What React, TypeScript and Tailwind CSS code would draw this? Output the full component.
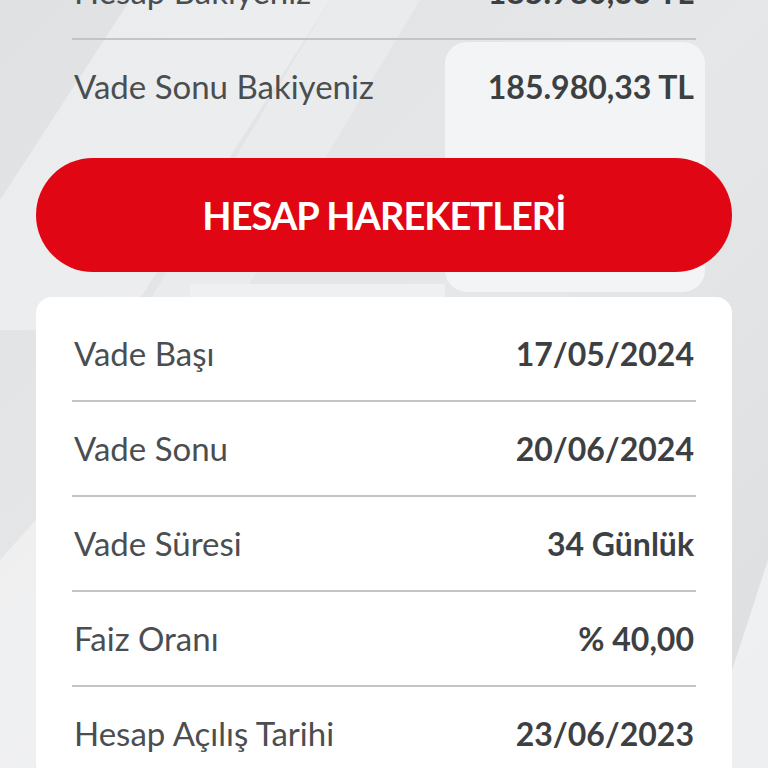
import React from "react";

const font = { fontFamily: "Lato, 'Open Sans', sans-serif" };

const summary = [
  { label: "Hesap Bakiyeniz", value: "185.980,33 TL" },
  { label: "Vade Sonu Bakiyeniz", value: "185.980,33 TL" },
];

const details = [
  { label: "Vade Başı", value: "17/05/2024" },
  { label: "Vade Sonu", value: "20/06/2024" },
  { label: "Vade Süresi", value: "34 Günlük" },
  { label: "Faiz Oranı", value: "% 40,00" },
  { label: "Hesap Açılış Tarihi", value: "23/06/2023" },
];

function Row({ label, value, last }: { label: string; value: string; last?: boolean }) {
  return (
    <div className="flex flex-col">
      <div className="flex h-[93px] items-center justify-between px-[2px]">
        <span className="text-[33px] font-normal text-[#4b4e51]">{label}</span>
        <span className="text-[32px] font-bold text-[#3d4043]">{value}</span>
      </div>
      {!last && <div className="h-[2px] bg-[#c3c4c6]" />}
    </div>
  );
}

function Backdrop() {
  return (
    <svg
      className="absolute inset-0 h-full w-full"
      viewBox="0 0 768 768"
      preserveAspectRatio="none"
    >
      <defs>
        <linearGradient id="bg" x1="0" y1="0" x2="1" y2="1">
          <stop offset="0" stopColor="#dfe1e3" />
          <stop offset="0.5" stopColor="#e6e7e9" />
          <stop offset="1" stopColor="#dcdee0" />
        </linearGradient>
      </defs>
      <rect width="768" height="768" fill="url(#bg)" />
      <polygon points="130,0 330,0 120,330 0,330 0,200" fill="#ffffff" opacity="0.35" />
      <polygon points="330,0 420,0 240,300 150,300" fill="#ffffff" opacity="0.25" />
      <rect x="445" y="42" width="260" height="250" rx="22" fill="#f3f4f5" />
      <polygon points="190,284 445,284 445,300 190,300" fill="#eff0f1" />
      <polygon points="768,560 768,768 700,768" fill="#ffffff" opacity="0.5" />
      <polygon points="0,560 36,520 36,768 0,768" fill="#ffffff" opacity="0.4" />
    </svg>
  );
}

export default function App() {
  return (
    <div className="relative h-[768px] w-[768px] overflow-hidden bg-[#e2e4e6]" style={font}>
      <Backdrop />
      <div className="relative mt-[-55px] flex flex-col px-[36px]">
        <div className="flex flex-col px-[36px]">
          {summary.map((r, i) => (
            <Row key={r.label} label={r.label} value={r.value} last={i === summary.length - 1} />
          ))}
        </div>

        <button className="mt-[25px] flex h-[114px] w-full items-center justify-center rounded-full bg-[#e10613] text-[38px] font-bold tracking-tight text-white">
          HESAP HAREKETLERİ
        </button>

        <div className="mt-[25px] flex flex-col rounded-[16px] bg-white px-[36px] pt-[10px]">
          {details.map((r, i) => (
            <Row key={r.label} label={r.label} value={r.value} last={i === details.length - 1} />
          ))}
        </div>
      </div>
    </div>
  );
}
